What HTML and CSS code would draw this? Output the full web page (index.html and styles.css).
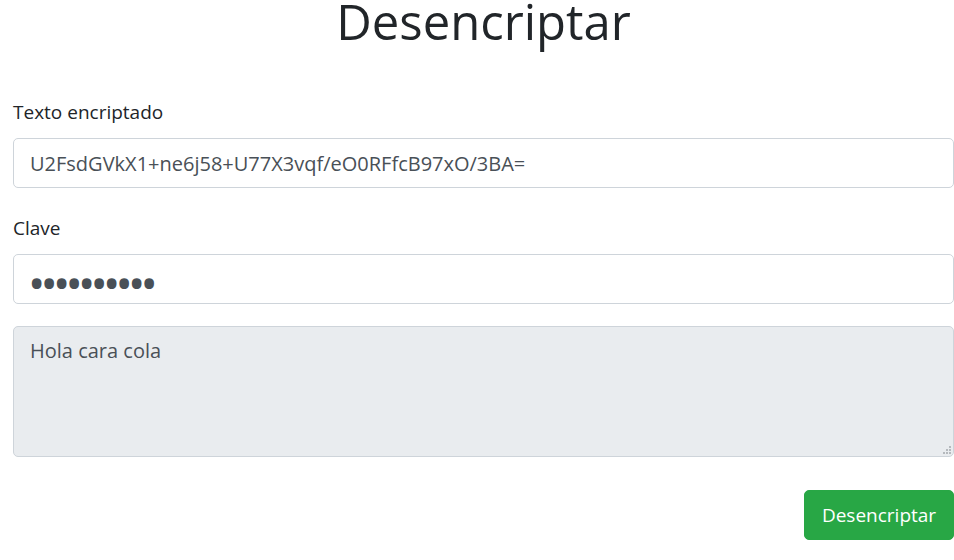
FILE: index.html
```html
<!DOCTYPE html>
<html lang="es">
<head>
<meta charset="utf-8">
<title>Desencriptar</title>
<link rel="stylesheet" href="styles.css">
</head>
<body>
<main class="page">
  <h1 class="title">Desencriptar</h1>
  <form class="form">
    <div class="group">
      <label class="label" for="enc">Texto encriptado</label>
      <input class="control" id="enc" type="text" value="U2FsdGVkX1+ne6j58+U77X3vqf/eO0RFfcB97xO/3BA=">
    </div>
    <div class="group group-key">
      <label class="label" for="key">Clave</label>
      <input class="control pass" id="key" type="password" value="1234567890">
    </div>
    <div class="group group-out">
      <textarea class="control area" readonly>Hola cara cola</textarea>
      <svg class="grip" width="10" height="10" viewBox="0 0 10 10" aria-hidden="true">
        <rect x="7" y="1" width="2" height="2"/>
        <rect x="4" y="4" width="2" height="2"/>
        <rect x="7" y="4" width="2" height="2"/>
        <rect x="1" y="7" width="2" height="2"/>
        <rect x="4" y="7" width="2" height="2"/>
        <rect x="7" y="7" width="2" height="2"/>
      </svg>
    </div>
    <div class="actions">
      <button type="button" class="btn">Desencriptar</button>
    </div>
  </form>
</main>
</body>
</html>
```
FILE: styles.css
```css
* { box-sizing: border-box; }
html, body { margin: 0; padding: 0; background: #fff; }
body {
  font-family: "Open Sans", "Noto Sans", sans-serif;
  color: #212529;
  overflow: hidden;
}
.page {
  width: 954px;
  padding-left: 13px;
}
.title {
  margin: 0;
  font-size: 49px;
  font-weight: 400;
  line-height: 42px;
  height: 42px;
  text-align: center;
}
.form {
  margin-top: 56px;
  display: flex;
  flex-direction: column;
}
.group {
  display: flex;
  flex-direction: column;
  position: relative;
}
.group-key { margin-top: 26px; }
.group-out { margin-top: 22px; }
.label {
  font-size: 19px;
  line-height: 28px;
  height: 28px;
  margin-bottom: 12px;
}
.control {
  width: 941px;
  height: 50px;
  border: 1px solid #ced4da;
  border-radius: 5px;
  padding: 0 16px;
  font-family: inherit;
  font-size: 20px;
  color: #495057;
  background: #fff;
  outline: none;
}
.pass {
  font-size: 46px;
  line-height: 42px;
  letter-spacing: -4.8px;
  padding: 6px 14px 0;
}
.area {
  height: 131px;
  padding: 9px 16px;
  line-height: 30px;
  background: #e9ecef;
  resize: none;
}
.grip {
  position: absolute;
  right: 2px;
  bottom: 2px;
  fill: #b5b9bd;
}
.actions {
  display: flex;
  justify-content: flex-end;
  margin-top: 33px;
}
.btn {
  height: 50px;
  width: 150px;
  border: 1px solid #28a745;
  border-radius: 5px;
  background: #28a745;
  color: #fff;
  font-family: inherit;
  font-size: 19px;
  padding: 0 16px;
}
```
